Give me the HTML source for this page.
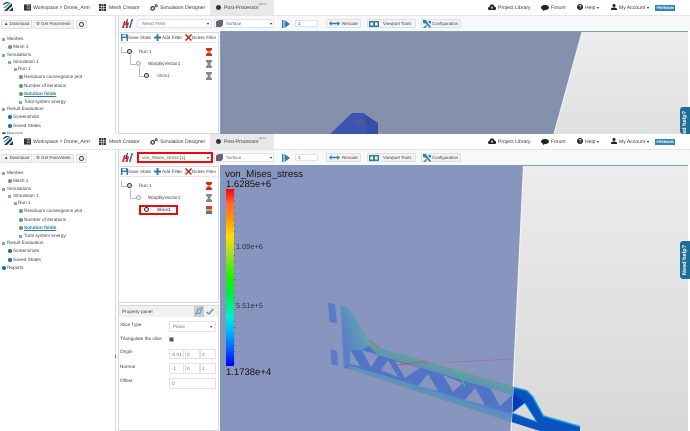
<!DOCTYPE html>
<html><head><meta charset="utf-8"><style>
html,body{margin:0;padding:0;background:#fff;overflow:hidden}
body{width:690px;height:431px;position:relative;overflow:hidden;font-family:"Liberation Sans",sans-serif;text-rendering:geometricPrecision}
.app{position:absolute;left:0;width:690px;overflow:hidden;background:#fff;filter:blur(.2px)}
.app div,.app svg{position:absolute}
.t{white-space:nowrap;font-size:4.7px;line-height:8px;height:8px;color:#444}
.n{font-size:5.05px;color:#383838}
.b{font-size:4.4px}
.nav{left:0;top:0;width:690px;height:15px;background:#fff;border-bottom:1px solid #e4e4e4}
.tab{left:210px;top:0;width:64px;height:15px;background:#e8e8e8}
.bar{left:118px;top:16px;width:572px;height:15px;background:#f8f8f8}
.btn{background:#f3f3f3;border:1px solid #e0e0e0;border-radius:1px;box-sizing:border-box}
.sel{background:#fff;border:1px solid #e2e2e2;box-sizing:border-box;height:9px}
.inp{background:#fff;border:1px solid #e2e2e2;box-sizing:border-box;border-radius:1px}
.div1{left:115px;top:16px;width:1px;background:#d8d8d8}
.pan{left:118px;top:32px;width:101px;box-sizing:border-box;border:1px solid #d8d8d8;background:#fff}
.sq{width:3px;height:3px;background:#8ea0cc}
.gr{width:4px;height:4px;background:#5f9f70;border-radius:50%}
.bl{width:4px;height:4px;background:#1c6f98;border-radius:50%}
.ar{width:0;height:0;border-left:1.5px solid transparent;border-right:1.5px solid transparent;border-top:2px solid #222}
.link{color:#2a7aa5;font-weight:bold;text-decoration:underline}
.ln{background:#bbb}
.gear{width:3px;height:3px;border:1.5px solid #333;border-radius:50%;background:#ddd}
.prem{left:655px;top:5px;width:20px;height:6px;background:#2d86b0;color:#fff;font-size:3.6px;line-height:6px;text-align:center;font-weight:bold}
.help{left:680px;background:#1d6f98;border-radius:3px 0 0 3px;overflow:hidden}
.help span{position:absolute;left:-14px;width:38px;height:8px;line-height:8px;transform:rotate(-90deg);color:#fff;font-size:5.6px;font-weight:bold;text-align:center;white-space:nowrap}
.lab{color:#111;white-space:nowrap;line-height:11px;height:11px;font-size:9.75px}
</style></head><body>
<svg width="0" height="0" style="position:absolute">
<defs>
<symbol id="logo" viewBox="0 0 10 10"><rect width="10" height="10" fill="#fff"/><path d="M0 10V3L7 0H3L0 2ZM1 9L9 1V4L4 9ZM6 9L10 5V9Z" fill="#1b3a4c"/><path d="M1 6L7 1" stroke="#3a8ab0" stroke-width="1.2"/></symbol>
<symbol id="ws" viewBox="0 0 8 7"><path d="M0 0H8V7H0Z" fill="#333"/><path d="M3 1H7M3 3H7M3 5H7" stroke="#ccc" stroke-width=".8"/></symbol>
<symbol id="mesh" viewBox="0 0 7 7"><path d="M0 0h2v2H0zM2.500 0h2v2h-2zM5 0h2v2H5zM0 2.500h2v2H0zM2.500 2.500h2v2h-2zM5 2.500h2v2H5zM0 5h2v2H0zM2.500 5h2v2h-2zM5 5h2v2H5z" fill="#333"/></symbol>
<symbol id="cogs" viewBox="0 0 9 8"><circle cx="3" cy="5" r="2" fill="none" stroke="#333" stroke-width="1.4"/><circle cx="7" cy="2" r="1.2" fill="none" stroke="#333" stroke-width="1"/></symbol>
<symbol id="cloud" viewBox="0 0 8 6"><path d="M1.500 6a1.500 1.500 0 0 1 0-3 2.500 2.500 0 0 1 5-.3A1.600 1.600 0 0 1 6.500 6Z" fill="#222"/><path d="M4 2v2.500M3 3.500L4 4.500 5 3.500" stroke="#fff" stroke-width=".6" fill="none"/></symbol>
<symbol id="chat" viewBox="0 0 8 6"><path d="M4 0C6 0 8 1 8 2.500S6 5 4 5L2 6V4.800C1 4.500 0 3.600 0 2.500 0 1 2 0 4 0Z" fill="#222"/></symbol>
<symbol id="q" viewBox="0 0 6 6"><circle cx="3" cy="3" r="3" fill="#222"/><path d="M2 2.300C2 1 4 1 4 2.300 4 3 3 3 3 3.800M3 4.500V5.100" stroke="#fff" stroke-width=".7" fill="none"/></symbol>
<symbol id="user" viewBox="0 0 6 6"><circle cx="3" cy="1.500" r="1.500" fill="#222"/><path d="M0 6V4.500L2 3.500H4L6 4.500V6Z" fill="#222"/></symbol>
<symbol id="brand" viewBox="0 0 11 9"><path d="M0 9L2 2H3.500L2 9ZM3.500 9L5.500 3 7 4 5.500 9Z" fill="#d22"/><path d="M3 6L5 0H6L4.500 6Z" fill="#234"/><path d="M7 9L9.500 0H11L8.500 9Z" fill="#1d6f98"/></symbol>
<symbol id="play" viewBox="0 0 8 8"><path d="M0 0H1.500V8H0ZM2.500 0L8 4 2.500 8Z" fill="#2a80aa"/></symbol>
<symbol id="arrows" viewBox="0 0 11 5"><path d="M0 2.500L2.500 0V1.700H8.500V0L11 2.500 8.500 5V3.300H2.500V5Z" fill="#2a80aa"/></symbol>
<symbol id="view" viewBox="0 0 10 6"><rect width="10" height="6" fill="#2a80aa"/><rect x="1.500" y="1.500" width="2.500" height="3" fill="#fff"/><rect x="6" y="1.500" width="2.500" height="3" fill="#fff"/></symbol>
<symbol id="conf" viewBox="0 0 8 8"><path d="M0 0L3 0 4 2 8 7 7 8 2.500 3.500 0 3ZM0 8L3 5 4 6 2 8ZM5 1H8V3.500L6.500 3.500Z" fill="#2a80aa"/></symbol>
<symbol id="save" viewBox="0 0 7 7"><path d="M0 0H6L7 1V7H0Z" fill="#2a80aa"/><rect x="1.500" y=".6" width="3.500" height="2" fill="#fff"/><rect x="1.500" y="4" width="4" height="3" fill="#fff"/></symbol>
<symbol id="add" viewBox="0 0 7 7"><path d="M2.500 0H4.500V2.500H7V4.500H4.500V7H2.500V4.500H0V2.500H2.500Z" fill="#2a80aa"/></symbol>
<symbol id="del" viewBox="0 0 7 7"><path d="M1 0L3.500 2.500 6 0 7 1 4.500 3.500 7 6 6 7 3.500 4.500 1 7 0 6 2.500 3.500 0 1Z" fill="#d01818"/></symbol>
<symbol id="hg" viewBox="0 0 6 8"><path d="M0 0H6V1.500L3.800 4 6 6.500V8H0V6.500L2.200 4 0 1.500Z" fill="#888"/></symbol>
<symbol id="hgr" viewBox="0 0 6 8"><path d="M0 0H6V1.500L3.800 4 6 6.500V8H0V6.500L2.200 4 0 1.500Z" fill="#d22"/><path d="M1.800 3H4.200V5H1.800Z" fill="#c8a020"/></symbol>
<symbol id="bar" viewBox="0 0 6 8"><rect width="6" height="3" fill="#e33"/><rect y="3" width="6" height="2" fill="#e8b020"/><rect y="5" width="6" height="3" fill="#2a80c0"/></symbol>
<symbol id="cube" viewBox="0 0 7 7"><path d="M0 1.500L3 0H7V5L5 7H0Z" fill="#667"/></symbol>
</defs>
</svg>

<!-- FIRST SCREEN -->
<div class="app" style="top:0;height:134px">
<div class="nav"></div><div class="tab"></div>
<svg style="left:3px;top:2px" width="10" height="10"><use href="#logo"/></svg>
<svg style="left:24px;top:4px" width="7" height="7"><use href="#ws"/></svg>
<div class="t n" style="left:33px;top:3.500px">Workspace &gt; Drone_Arm</div>
<svg style="left:99px;top:4px" width="7" height="7"><use href="#mesh"/></svg>
<div class="t n" style="left:109px;top:3.500px">Mesh Creator</div>
<svg style="left:150px;top:4px" width="8" height="7"><use href="#cogs"/></svg>
<div class="t n" style="left:160px;top:3.500px">Simulation Designer</div>
<div style="left:216px;top:5px;width:5px;height:5px;border-radius:50%;background:#333"></div>
<div class="t n" style="left:224px;top:3.500px">Post-Processor</div>
<div class="t" style="left:259px;top:0;font-size:2.800px;color:#777">BETA</div>
<svg style="left:488px;top:4px" width="8" height="6"><use href="#cloud"/></svg>
<div class="t n" style="left:498px;top:3.500px">Project Library</div>
<svg style="left:541px;top:5px" width="8" height="6"><use href="#chat"/></svg>
<div class="t n" style="left:551px;top:3.500px">Forum</div>
<svg style="left:577px;top:4px" width="6" height="6"><use href="#q"/></svg>
<div class="t n" style="left:585px;top:3.500px">Help</div><div class="ar" style="left:597px;top:7px"></div>
<svg style="left:611px;top:4px" width="6" height="6"><use href="#user"/></svg>
<div class="t n" style="left:619px;top:3.500px">My Account</div><div class="ar" style="left:647px;top:7px"></div>
<div class="prem">PREMIUM</div>

<div class="btn" style="left:1px;top:19.500px;width:31px;height:9.500px"></div>
<div class="t b" style="left:4px;top:20px">&#9650; Download</div>
<div class="btn" style="left:33px;top:19.500px;width:41px;height:9.500px"></div>
<div class="t b" style="left:36px;top:20px">&#9881; Get ParaView5</div>
<div class="btn" style="left:76px;top:19.500px;width:11px;height:9.500px"></div>
<div style="left:79px;top:22px;width:3px;height:3px;border:1px solid #444;border-radius:50%"></div>

<div class="div1" style="height:118px"></div>
<div class="bar"></div>
<div style="left:118px;top:16px;width:1px;height:118px;background:#d8d8d8"></div>
<svg style="left:122px;top:19px" width="11" height="9"><use href="#brand"/></svg>
<div class="sel" style="left:137px;top:19px;width:75px"></div>
<div class="t b" style="left:142px;top:19.500px;color:#666">Select Field</div><div class="ar" style="left:207px;top:23px"></div>
<div class="sel" style="left:214px;top:19px;width:60px"></div>
<svg style="left:216px;top:20px" width="7" height="7"><use href="#cube"/></svg>
<div class="t b" style="left:226px;top:19.500px;color:#666">Surface</div><div class="ar" style="left:270px;top:23px"></div>
<svg style="left:282px;top:20px" width="8" height="8"><use href="#play"/></svg>
<div class="inp" style="left:295px;top:20px;width:23px;height:7px"></div>
<div class="t b" style="left:298px;top:19.500px">1</div>
<div class="btn" style="left:326px;top:19px;width:35px;height:9px"></div>
<svg style="left:329px;top:21px" width="11" height="5"><use href="#arrows"/></svg>
<div class="t b" style="left:342px;top:19.500px">Rescale</div>
<div class="btn" style="left:367px;top:19px;width:49px;height:9px"></div>
<svg style="left:369px;top:20.500px" width="10" height="6"><use href="#view"/></svg>
<div class="t b" style="left:383px;top:19.500px">Viewport Tools</div>
<div class="btn" style="left:421px;top:19px;width:40px;height:9px"></div>
<svg style="left:423px;top:20px" width="8" height="8"><use href="#conf"/></svg>
<div class="t b" style="left:432px;top:19.500px">Configuration</div>

<div class="pan" style="height:102px"></div>
<svg style="left:121px;top:34px" width="7" height="7"><use href="#save"/></svg><div class="t" style="left:128px;top:33.500px">Save State</div>
<svg style="left:154px;top:34px" width="7" height="7"><use href="#add"/></svg><div class="t" style="left:162px;top:33.500px">Add Filter</div>
<svg style="left:185px;top:34px" width="7" height="7"><use href="#del"/></svg><div class="t" style="left:192px;top:33.500px;font-size:4.500px">Delete Filter</div>
<div style="left:119px;top:42px;width:99px;height:1px;background:#e8e8e8"></div>
<div class="ln" style="left:121px;top:47px;width:1px;height:6px"></div><div class="ln" style="left:121px;top:52px;width:6px;height:1px"></div>
<div class="gear" style="left:127px;top:49px"></div><div class="t" style="left:139px;top:48px">Run 1</div>
<div class="ln" style="left:130px;top:55px;width:1px;height:9px"></div><div class="ln" style="left:130px;top:64px;width:6px;height:1px"></div>
<div class="gear" style="left:136px;top:61px;background:#eee;border-color:#aaa"></div><div class="t" style="left:148px;top:60px">WarpByVector1</div>
<div class="ln" style="left:139px;top:67px;width:1px;height:9px"></div><div class="ln" style="left:139px;top:76px;width:5px;height:1px"></div>
<div class="gear" style="left:144px;top:73px"></div><div class="t" style="left:157px;top:72px;color:#2a6f9a">Slice1</div>
<svg style="left:206px;top:48px" width="6" height="8"><use href="#hgr"/></svg>
<svg style="left:206px;top:60px" width="6" height="8"><use href="#hg"/></svg>
<svg style="left:206px;top:72px" width="6" height="8"><use href="#hg"/></svg>

<div class="sq" style="left:2px;top:38px"></div><div class="t" style="left:7px;top:35px">Meshes</div>
<div class="gr" style="left:8px;top:45px"></div><div class="t" style="left:13px;top:43px">Mesh 1</div>
<div class="sq" style="left:2px;top:54px"></div><div class="t" style="left:7px;top:51px">Simulations</div>
<div class="sq" style="left:8px;top:61px"></div><div class="t" style="left:13px;top:58px">Simulation 1</div>
<div class="sq" style="left:14px;top:68px"></div><div class="t" style="left:18px;top:65px">Run 1</div>
<div class="gr" style="left:19px;top:75px"></div><div class="t" style="left:24px;top:73px">Residuum convergence plot</div>
<div class="gr" style="left:19px;top:84px"></div><div class="t" style="left:24px;top:82px">Number of iterations</div>
<div class="gr" style="left:19px;top:92px"></div><div class="t link" style="left:24px;top:90px">Solution fields</div>
<div class="sq" style="left:19px;top:101px"></div><div class="t" style="left:24px;top:98px">Total system energy</div>
<div class="sq" style="left:2px;top:108px"></div><div class="t" style="left:7px;top:105px">Result Evaluation</div>
<div class="bl" style="left:8px;top:115px"></div><div class="t" style="left:13px;top:113px">Screenshots</div>
<div class="bl" style="left:8px;top:124px"></div><div class="t" style="left:13px;top:122px">Saved States</div>
<div class="bl" style="left:2px;top:132px;height:2px;border-radius:2px 2px 0 0"></div><div class="t" style="left:7px;top:130px;height:4px;overflow:hidden">Reports</div>

<svg style="left:220px;top:31px" width="470" height="103" viewBox="220 31 470 103">
<defs><linearGradient id="g1" x1="0" y1="0" x2="0" y2="1"><stop offset="0" stop-color="#ececec"/><stop offset="1" stop-color="#e0e0e0"/></linearGradient></defs>
<rect x="220" y="31" width="470" height="103" fill="#fff"/>
<rect x="221" y="32" width="467" height="102" fill="url(#g1)"/>
<path d="M221 32H582L554 134H221Z" fill="#8490ac"/>
<path d="M582 32L554 134" stroke="#f4f4f4" stroke-width="1"/>
<path d="M220 31.500H688M220.500 31V134" stroke="#6fa3b8" stroke-width="1"/>
<path d="M330 134L352 113H363L378 123V134Z" fill="#3d55b0"/>
<path d="M363 113L378 123V134H368Z" fill="#33489c" opacity=".6"/>
<ellipse cx="360" cy="122" rx="5" ry="3" fill="#4a5a90"/>
</svg>
<div class="help" style="top:107px;width:10px;height:27px"><span style="top:15px">Need help?</span></div>
</div>

<!-- SECOND SCREEN -->
<div class="app" style="top:134px;height:297px">
<div class="nav"></div><div class="tab"></div>
<svg style="left:3px;top:2px" width="10" height="10"><use href="#logo"/></svg>
<svg style="left:24px;top:4px" width="7" height="7"><use href="#ws"/></svg>
<div class="t n" style="left:33px;top:3.500px">Workspace &gt; Drone_Arm</div>
<svg style="left:99px;top:4px" width="7" height="7"><use href="#mesh"/></svg>
<div class="t n" style="left:109px;top:3.500px">Mesh Creator</div>
<svg style="left:150px;top:4px" width="8" height="7"><use href="#cogs"/></svg>
<div class="t n" style="left:160px;top:3.500px">Simulation Designer</div>
<div style="left:216px;top:5px;width:5px;height:5px;border-radius:50%;background:#333"></div>
<div class="t n" style="left:224px;top:3.500px">Post-Processor</div>
<div class="t" style="left:259px;top:0;font-size:2.800px;color:#777">BETA</div>
<svg style="left:488px;top:4px" width="8" height="6"><use href="#cloud"/></svg>
<div class="t n" style="left:498px;top:3.500px">Project Library</div>
<svg style="left:541px;top:5px" width="8" height="6"><use href="#chat"/></svg>
<div class="t n" style="left:551px;top:3.500px">Forum</div>
<svg style="left:577px;top:4px" width="6" height="6"><use href="#q"/></svg>
<div class="t n" style="left:585px;top:3.500px">Help</div><div class="ar" style="left:597px;top:7px"></div>
<svg style="left:611px;top:4px" width="6" height="6"><use href="#user"/></svg>
<div class="t n" style="left:619px;top:3.500px">My Account</div><div class="ar" style="left:647px;top:7px"></div>
<div class="prem">PREMIUM</div>

<div class="btn" style="left:1px;top:19.500px;width:31px;height:9.500px"></div>
<div class="t b" style="left:4px;top:20px">&#9650; Download</div>
<div class="btn" style="left:33px;top:19.500px;width:41px;height:9.500px"></div>
<div class="t b" style="left:36px;top:20px">&#9881; Get ParaView5</div>
<div class="btn" style="left:76px;top:19.500px;width:11px;height:9.500px"></div>
<div style="left:79px;top:22px;width:3px;height:3px;border:1px solid #444;border-radius:50%"></div>

<div class="div1" style="height:281px"></div>
<div class="bar"></div>
<div style="left:118px;top:16px;width:1px;height:281px;background:#d8d8d8"></div>
<svg style="left:122px;top:19px" width="11" height="9"><use href="#brand"/></svg>
<div class="sel" style="left:137px;top:18px;width:76px;height:11px;border:2px solid #ee0a0a"></div>
<div class="t b" style="left:142px;top:19.500px;font-size:4.600px;color:#555">von_Mises_stress [1]</div><div class="ar" style="left:207px;top:23px"></div>
<div class="sel" style="left:214px;top:19px;width:60px"></div>
<svg style="left:216px;top:20px" width="7" height="7"><use href="#cube"/></svg>
<div class="t b" style="left:226px;top:19.500px;color:#666">Surface</div><div class="ar" style="left:270px;top:23px"></div>
<svg style="left:282px;top:20px" width="8" height="8"><use href="#play"/></svg>
<div class="inp" style="left:295px;top:20px;width:23px;height:7px"></div>
<div class="t b" style="left:298px;top:19.500px">1</div>
<div class="btn" style="left:326px;top:19px;width:35px;height:9px"></div>
<svg style="left:329px;top:21px" width="11" height="5"><use href="#arrows"/></svg>
<div class="t b" style="left:342px;top:19.500px">Rescale</div>
<div class="btn" style="left:367px;top:19px;width:49px;height:9px"></div>
<svg style="left:369px;top:20.500px" width="10" height="6"><use href="#view"/></svg>
<div class="t b" style="left:383px;top:19.500px">Viewport Tools</div>
<div class="btn" style="left:421px;top:19px;width:40px;height:9px"></div>
<svg style="left:423px;top:20px" width="8" height="8"><use href="#conf"/></svg>
<div class="t b" style="left:432px;top:19.500px">Configuration</div>

<div class="pan" style="height:137px"></div>
<svg style="left:121px;top:34px" width="7" height="7"><use href="#save"/></svg><div class="t" style="left:128px;top:33.500px">Save State</div>
<svg style="left:154px;top:34px" width="7" height="7"><use href="#add"/></svg><div class="t" style="left:162px;top:33.500px">Add Filter</div>
<svg style="left:185px;top:34px" width="7" height="7"><use href="#del"/></svg><div class="t" style="left:192px;top:33.500px;font-size:4.500px">Delete Filter</div>
<div style="left:119px;top:42px;width:99px;height:1px;background:#e8e8e8"></div>
<div class="ln" style="left:121px;top:47px;width:1px;height:6px"></div><div class="ln" style="left:121px;top:52px;width:6px;height:1px"></div>
<div class="gear" style="left:127px;top:49px"></div><div class="t" style="left:139px;top:48px">Run 1</div>
<div class="ln" style="left:130px;top:55px;width:1px;height:9px"></div><div class="ln" style="left:130px;top:64px;width:6px;height:1px"></div>
<div class="gear" style="left:136px;top:61px;background:#eee;border-color:#aaa"></div><div class="t" style="left:148px;top:60px">WarpByVector1</div>
<div style="left:139px;top:71px;width:39px;height:9.500px;box-sizing:border-box;border:2px solid #ee0a0a"></div>
<div class="gear" style="left:144px;top:73px"></div><div class="t" style="left:157px;top:72px;color:#2a6f9a;font-weight:bold">Slice1</div>
<svg style="left:206px;top:48px" width="6" height="8"><use href="#hgr"/></svg>
<svg style="left:206px;top:60px" width="6" height="8"><use href="#hg"/></svg>
<svg style="left:206px;top:72px" width="6" height="8"><use href="#bar"/></svg>

<div class="pan" style="top:171px;height:126px"></div>
<div style="left:119px;top:172px;width:99px;height:11px;background:#f1f1f1"></div>
<div class="t" style="left:122px;top:173.500px;color:#444">Property panel</div>
<div style="left:194px;top:172px;width:10px;height:11px;background:#ccc"></div>
<svg style="left:195px;top:173px" width="8" height="8" viewBox="0 0 8 8"><path d="M1 7L3 2 7 1 5 6Z" fill="none" stroke="#4a98c4" stroke-width="1"/></svg>
<svg style="left:206px;top:174px" width="8" height="7" viewBox="0 0 8 7"><path d="M.5 4L3 6 7.500 .8" fill="none" stroke="#6a9ab8" stroke-width="1.500"/></svg>
<div class="t" style="left:120px;top:187px">Slice Type</div>
<div class="inp" style="left:169px;top:187px;width:47px;height:11px"></div>
<div class="t" style="left:173px;top:189px;color:#777">Plane</div><div class="ar" style="left:210px;top:192px"></div>
<div class="t" style="left:120px;top:201px">Triangulate the slice</div>
<div class="inp" style="left:169px;top:203px;width:5px;height:5px;background:#555;border-color:#aaa"></div>
<div class="t" style="left:120px;top:214px">Origin</div>
<div class="inp" style="left:169px;top:215px;width:15px;height:10px"></div><div class="t" style="left:171px;top:216.500px;color:#777">-0.01</div>
<div class="inp" style="left:185px;top:215px;width:14.500px;height:10px"></div><div class="t" style="left:187px;top:216.500px;color:#777">0</div>
<div class="inp" style="left:200px;top:215px;width:15.500px;height:10px"></div><div class="t" style="left:202px;top:216.500px;color:#777">0</div>
<div class="t" style="left:120px;top:229px">Normal</div>
<div class="inp" style="left:169px;top:229px;width:15px;height:11px"></div><div class="t" style="left:172px;top:231px;color:#777">-1</div>
<div class="inp" style="left:185px;top:229px;width:14.500px;height:11px"></div><div class="t" style="left:187px;top:231px;color:#777">0</div>
<div class="inp" style="left:200px;top:229px;width:15.500px;height:11px"></div><div class="t" style="left:202px;top:231px;color:#777">1</div>
<div class="t" style="left:120px;top:243px">Offset</div>
<div class="inp" style="left:169px;top:244px;width:47px;height:11px"></div><div class="t" style="left:172px;top:246px;color:#777">0</div>
<div style="left:115px;top:221px;width:1px;height:3px;background:#777"></div>

<div class="sq" style="left:2px;top:38px"></div><div class="t" style="left:7px;top:35px">Meshes</div>
<div class="gr" style="left:8px;top:45px"></div><div class="t" style="left:13px;top:43px">Mesh 1</div>
<div class="sq" style="left:2px;top:54px"></div><div class="t" style="left:7px;top:51px">Simulations</div>
<div class="sq" style="left:8px;top:61px"></div><div class="t" style="left:13px;top:58px">Simulation 1</div>
<div class="sq" style="left:14px;top:68px"></div><div class="t" style="left:18px;top:65px">Run 1</div>
<div class="gr" style="left:19px;top:75px"></div><div class="t" style="left:24px;top:73px">Residuum convergence plot</div>
<div class="gr" style="left:19px;top:84px"></div><div class="t" style="left:24px;top:82px">Number of iterations</div>
<div class="gr" style="left:19px;top:92px"></div><div class="t link" style="left:24px;top:90px">Solution fields</div>
<div class="sq" style="left:19px;top:101px"></div><div class="t" style="left:24px;top:98px">Total system energy</div>
<div class="sq" style="left:2px;top:108px"></div><div class="t" style="left:7px;top:105px">Result Evaluation</div>
<div class="bl" style="left:8px;top:115px"></div><div class="t" style="left:13px;top:113px">Screenshots</div>
<div class="bl" style="left:8px;top:124px"></div><div class="t" style="left:13px;top:122px">Saved States</div>
<div class="bl" style="left:2px;top:132px"></div><div class="t" style="left:7px;top:130px">Reports</div>

<svg style="left:220px;top:31px" width="470" height="266" viewBox="220 165 470 266">
<defs>
<linearGradient id="g2" x1="0" y1="0" x2="0" y2="1"><stop offset="0" stop-color="#ececec"/><stop offset=".6" stop-color="#e0e0e0"/><stop offset="1" stop-color="#d8d8d8"/></linearGradient>
<linearGradient id="tc" gradientUnits="userSpaceOnUse" x1="400" y1="352" x2="396" y2="366"><stop offset="0" stop-color="#66a29a"/><stop offset="1" stop-color="#5a8cc4"/></linearGradient>
<linearGradient id="bc" gradientUnits="userSpaceOnUse" x1="420" y1="386" x2="416" y2="398"><stop offset="0" stop-color="#5a8cc4"/><stop offset="1" stop-color="#6aa396"/></linearGradient>
<linearGradient id="side" gradientUnits="userSpaceOnUse" x1="345" y1="340" x2="368" y2="332"><stop offset="0" stop-color="#5a80c6"/><stop offset=".7" stop-color="#5f9cb6"/><stop offset="1" stop-color="#6ea898"/></linearGradient>
<clipPath id="cl"><path d="M220 165H523.500L511 431H220Z"/></clipPath>
<clipPath id="cr"><path d="M523.500 165H690V431H511Z"/></clipPath>
</defs>
<rect x="220" y="165" width="470" height="266" fill="#fff"/>
<rect x="221" y="166" width="467" height="265" fill="url(#g2)"/>
<g clip-path="url(#cr)">
<path fill-rule="evenodd" d="M505 386L526.700 390.700 532.700 396.700 543.300 416 580 426V431H540L505 420ZM525 403L512 413 537 422Z" fill="#0a52c0"/>
<path d="M512 387L526.700 390.700 532.700 396.700 543.300 416 580 426.500" fill="none" stroke="#10a8d0" stroke-width="1.500"/>
<path d="M512 413L537 422M525 403L537 422" fill="none" stroke="#1090d0" stroke-width="1"/>
<path d="M512 392L524 402 512 412Z" fill="#0038c0"/>
</g>
<path d="M221 166H523.500L511 431H221Z" fill="#8896bf"/>
<path d="M523.500 166L511 431" stroke="#f6f6f6" stroke-width="1"/>
<path d="M220 165.500H688M220.500 165V431" stroke="#6fa3b8" stroke-width="1"/>
<g clip-path="url(#cl)">
<path d="M328 303L335 304 337 323 329.500 322ZM330.500 349L337 351 338 366 331.500 364Z" fill="#5a7cc8"/>
<path fill-rule="evenodd" d="M340.700 306L347.300 307.300 369.300 340 380 348.300 515 387 515 423 510 421.700 349 369 344 368ZM350 349.500L360 366 350 364ZM361.700 350L378.300 355.300 371 367.300ZM388 360L381 370 398 377ZM395 361L420 368 405 378ZM428 374L418 386 438 391ZM443 375L463 383 453 392ZM475 388L465 400 485 405ZM490 388L512 395 500 406Z" fill="#5274c6"/>
<path d="M380 348.300L515 387 515 396 378 355 369 346 372 343Z" fill="url(#tc)"/>
<path d="M349 365L515 415 515 423 510 421.700 349 369Z" fill="url(#bc)"/>
<path d="M340.700 306L347.300 307.300 369.300 340 372 344 361 350 350 349.500 350 364 344 368Z" fill="url(#side)"/>
<path d="M350 349.500L360 366 350 364ZM361.700 350L378.300 355.300 371 367.300Z" fill="#8896bf"/>
<path d="M369 340L380 348" stroke="#9a7c78" stroke-width="1.200"/>
</g>
<path d="M396 365L513 359" stroke="#a07090" stroke-width=".7" opacity=".8"/>
<path d="M396 365L428 361" stroke="#c05050" stroke-width=".8"/>
<path d="M446 342L465 387" stroke="#7aa0a0" stroke-width=".6"/>
<path d="M455 345L456 372" stroke="#8aa090" stroke-width=".6"/>
<path d="M459 372L465 386" stroke="#30d060" stroke-width="1"/>
</svg>
<div style="left:225.500px;top:55px;width:8px;height:177px;background:linear-gradient(#f00 0,#f63 8%,#f90 17%,#fd0 27%,#9d2 38%,#2e0 50%,#0e4 60%,#0ec 72%,#0bf 80%,#07f 88%,#00f 100%)"></div>
<div style="left:233.500px;top:55px;width:1px;height:177px;background:repeating-linear-gradient(#333 0,#333 1px,transparent 1px,transparent 6px);opacity:.5"></div>
<div class="lab" style="left:225px;top:35px">von_Mises_stress</div>
<div class="lab" style="left:226px;top:45px;font-size:9.500px">1.6285e+6</div>
<div class="lab" style="left:236px;top:107px;font-size:7.400px;color:#333">1.09e+6</div>
<div class="lab" style="left:236px;top:166px;font-size:7.400px;color:#333">5.51e+5</div>
<div class="lab" style="left:226px;top:232.500px;font-size:9.500px">1.1738e+4</div>
<div class="help" style="top:107px;width:10px;height:38px"><span style="top:15px">Need help?</span></div>
</div>
</body></html>
